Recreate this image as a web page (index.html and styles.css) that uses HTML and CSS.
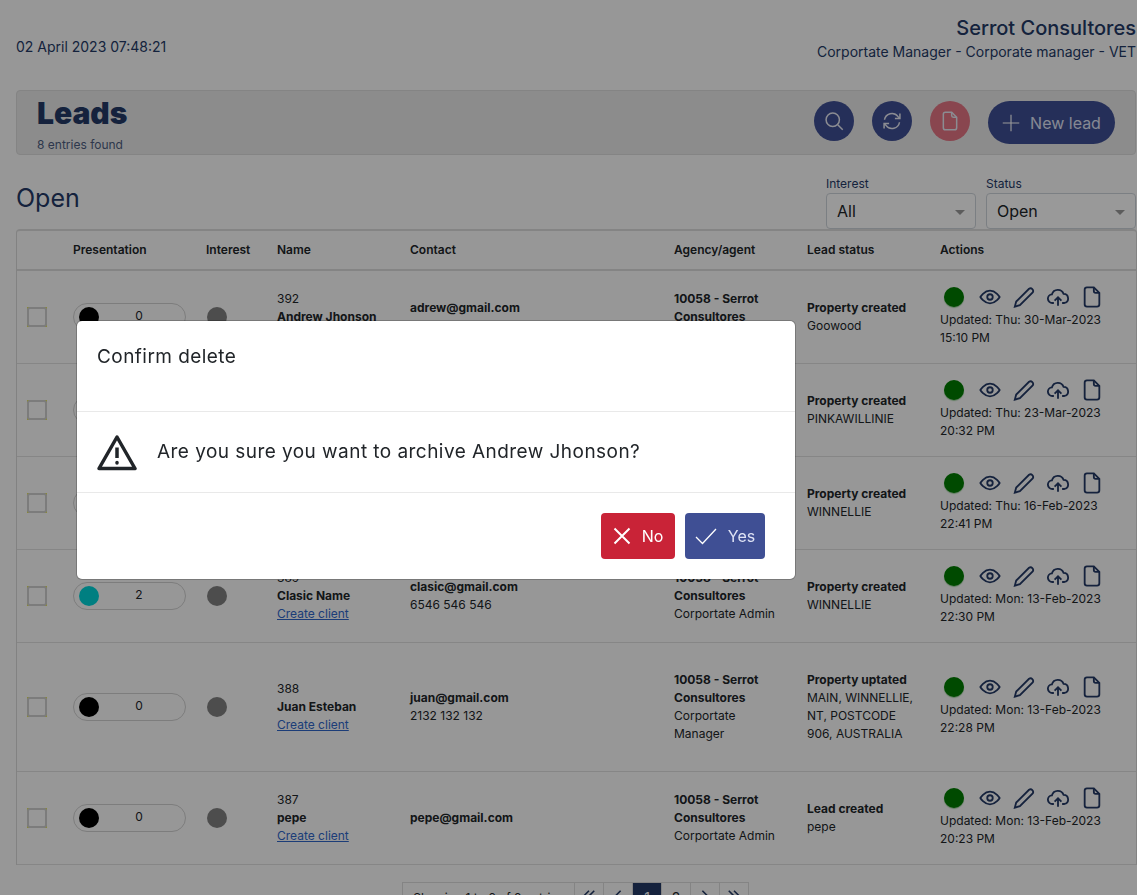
FILE: index.html
```html
<!doctype html>
<html lang="en">
<head>
  <meta charset="utf-8">
  <title>Leads</title>
  <link rel="stylesheet" href="styles.css">
</head>
<body>
  <svg class="defs" width="0" height="0">
    <symbol id="i-eye" viewBox="0 0 24 24"><path d="M1.500 12S5.500 5 12 5s10.500 7 10.500 7-4 7-10.500 7S1.500 12 1.500 12z"/><circle cx="12" cy="12" r="3"/></symbol>
    <symbol id="i-pen" viewBox="0 0 24 24"><path d="M17.500 3a2.900 2.900 0 0 1 4 4L7.500 21 2 22.500 3.500 17z"/></symbol>
    <symbol id="i-up" viewBox="0 0 24 24"><path d="M7.500 18.500H6a4.700 4.700 0 0 1-.6-9.400A6.700 6.700 0 0 1 18.100 8.600a5 5 0 0 1 .9 9.900h-2.500"/><path d="M12 21.500V12.500M8.300 16l3.700-3.700 3.700 3.700"/></symbol>
    <symbol id="i-doc" viewBox="0 0 24 24"><path d="M14 1.500H6.500a2.500 2.500 0 0 0-2.500 2.500v16a2.500 2.500 0 0 0 2.500 2.500h11a2.500 2.500 0 0 0 2.500-2.500V7.500z"/><path d="M14 1.500v4a2 2 0 0 0 2 2h4"/></symbol>
  </svg>

  <div class="page">
    <header class="topbar">
      <div class="date">02 April 2023 07:48:21</div>
      <div class="who">
        <div class="who-name">Serrot Consultores</div>
        <div class="who-role">Corportate Manager - Corporate manager - VET</div>
      </div>
    </header>

    <section class="title-card">
      <div class="title-text">
        <h1>Leads</h1>
        <div class="found">8 entries found</div>
      </div>
      <div class="title-actions">
        <button class="round">
          <svg viewBox="0 0 24 24"><circle cx="10.500" cy="10.500" r="8"/><path d="M16.500 16.500l6 6"/></svg>
        </button>
        <button class="round">
          <svg viewBox="0 0 24 24"><path d="M3 10.500A9 9 0 0 1 19 6.500l2 2"/><path d="M21.500 3v6h-6"/><path d="M21 13.500A9 9 0 0 1 5 17.500l-2-2"/><path d="M2.500 21v-6h6"/></svg>
        </button>
        <button class="round round-red">
          <svg viewBox="0 0 24 24"><use href="#i-doc"/></svg>
        </button>
        <button class="pill-btn">
          <svg viewBox="0 0 24 24"><path d="M12 1v22M1 12h22"/></svg>
          New lead
        </button>
      </div>
    </section>

    <section class="open-bar">
      <h2>Open</h2>
      <div class="filters">
        <div class="filter">
          <label>Interest</label>
          <div class="select">All</div>
        </div>
        <div class="filter">
          <label>Status</label>
          <div class="select">Open</div>
        </div>
      </div>
    </section>

    <table class="leads">
      <colgroup>
        <col class="c-check"><col class="c-pres"><col class="c-int"><col class="c-name">
        <col class="c-contact"><col class="c-agency"><col class="c-status"><col class="c-actions">
      </colgroup>
      <thead>
        <tr>
          <th></th><th>Presentation</th><th>Interest</th><th>Name</th>
          <th>Contact</th><th>Agency/agent</th><th>Lead status</th><th>Actions</th>
        </tr>
      </thead>
      <tbody>
        <tr>
          <td><span class="check"><span></span></span></td>
          <td><div class="pres"><span class="dot dot-black"></span><span class="num">0</span></div></td>
          <td><span class="dot dot-grey"></span></td>
          <td>392<br><b>Andrew Jhonson</b><br><a href="#">Create client</a></td>
          <td><b>adrew@gmail.com</b><br>6546 546 546</td>
          <td><b>10058 - Serrot Consultores</b><br>Corportate Admin</td>
          <td><b>Property created</b><br>Goowood</td>
          <td>
            <div class="acts"><span class="dot dot-green"></span><svg><use href="#i-eye"/></svg><svg><use href="#i-pen"/></svg><svg><use href="#i-up"/></svg><svg><use href="#i-doc"/></svg></div>
            Updated: Thu: 30-Mar-2023<br>15:10 PM
          </td>
        </tr>
        <tr>
          <td><span class="check"><span></span></span></td>
          <td><div class="pres"><span class="dot dot-black"></span><span class="num">0</span></div></td>
          <td><span class="dot dot-grey"></span></td>
          <td>391<br><b>Maria Lopez</b><br><a href="#">Create client</a></td>
          <td><b>maria@gmail.com</b><br>2132 132 132</td>
          <td><b>10058 - Serrot Consultores</b><br>Corportate Admin</td>
          <td><b>Property created</b><br>PINKAWILLINIE</td>
          <td>
            <div class="acts"><span class="dot dot-green"></span><svg><use href="#i-eye"/></svg><svg><use href="#i-pen"/></svg><svg><use href="#i-up"/></svg><svg><use href="#i-doc"/></svg></div>
            Updated: Thu: 23-Mar-2023<br>20:32 PM
          </td>
        </tr>
        <tr>
          <td><span class="check"><span></span></span></td>
          <td><div class="pres"><span class="dot dot-black"></span><span class="num">0</span></div></td>
          <td><span class="dot dot-grey"></span></td>
          <td>390<br><b>Test Name</b><br><a href="#">Create client</a></td>
          <td><b>test@gmail.com</b><br>6546 546 546</td>
          <td><b>10058 - Serrot Consultores</b><br>Corportate Admin</td>
          <td><b>Property created</b><br>WINNELLIE</td>
          <td>
            <div class="acts"><span class="dot dot-green"></span><svg><use href="#i-eye"/></svg><svg><use href="#i-pen"/></svg><svg><use href="#i-up"/></svg><svg><use href="#i-doc"/></svg></div>
            Updated: Thu: 16-Feb-2023<br>22:41 PM
          </td>
        </tr>
        <tr>
          <td><span class="check"><span></span></span></td>
          <td><div class="pres"><span class="dot dot-teal"></span><span class="num">2</span></div></td>
          <td><span class="dot dot-grey"></span></td>
          <td>389<br><b>Clasic Name</b><br><a href="#">Create client</a></td>
          <td><b>clasic@gmail.com</b><br>6546 546 546</td>
          <td><b>10058 - Serrot Consultores</b><br>Corportate Admin</td>
          <td><b>Property created</b><br>WINNELLIE</td>
          <td>
            <div class="acts"><span class="dot dot-green"></span><svg><use href="#i-eye"/></svg><svg><use href="#i-pen"/></svg><svg><use href="#i-up"/></svg><svg><use href="#i-doc"/></svg></div>
            Updated: Mon: 13-Feb-2023<br>22:30 PM
          </td>
        </tr>
        <tr class="tall">
          <td><span class="check"><span></span></span></td>
          <td><div class="pres"><span class="dot dot-black"></span><span class="num">0</span></div></td>
          <td><span class="dot dot-grey"></span></td>
          <td>388<br><b>Juan Esteban</b><br><a href="#">Create client</a></td>
          <td><b>juan@gmail.com</b><br>2132 132 132</td>
          <td><b>10058 - Serrot Consultores</b><br>Corportate Manager</td>
          <td><b>Property uptated</b><br>MAIN, WINNELLIE, NT, POSTCODE 906, AUSTRALIA</td>
          <td>
            <div class="acts"><span class="dot dot-green"></span><svg><use href="#i-eye"/></svg><svg><use href="#i-pen"/></svg><svg><use href="#i-up"/></svg><svg><use href="#i-doc"/></svg></div>
            Updated: Mon: 13-Feb-2023<br>22:28 PM
          </td>
        </tr>
        <tr>
          <td><span class="check"><span></span></span></td>
          <td><div class="pres"><span class="dot dot-black"></span><span class="num">0</span></div></td>
          <td><span class="dot dot-grey"></span></td>
          <td>387<br><b>pepe</b><br><a href="#">Create client</a></td>
          <td><b>pepe@gmail.com</b></td>
          <td><b>10058 - Serrot Consultores</b><br>Corportate Admin</td>
          <td><b>Lead created</b><br>pepe</td>
          <td>
            <div class="acts"><span class="dot dot-green"></span><svg><use href="#i-eye"/></svg><svg><use href="#i-pen"/></svg><svg><use href="#i-up"/></svg><svg><use href="#i-doc"/></svg></div>
            Updated: Mon: 13-Feb-2023<br>20:23 PM
          </td>
        </tr>
      </tbody>
    </table>

    <nav class="pager">
      <span class="pager-info">Showing 1 to 6 of 8 entries</span>
      <span class="pager-item"><svg viewBox="0 0 16 16"><path d="M8 2 2 8l6 6M14 2 8 8l6 6"/></svg></span>
      <span class="pager-item"><svg viewBox="0 0 16 16"><path d="M11 2 5 8l6 6"/></svg></span>
      <span class="pager-item pager-on">1</span>
      <span class="pager-item">2</span>
      <span class="pager-item"><svg viewBox="0 0 16 16"><path d="M5 2l6 6-6 6"/></svg></span>
      <span class="pager-item"><svg viewBox="0 0 16 16"><path d="M2 2l6 6-6 6M8 2l6 6-6 6"/></svg></span>
    </nav>
  </div>

  <div class="backdrop"></div>
  <div class="modal">
    <div class="modal-head">Confirm delete</div>
    <div class="modal-body">
      <svg class="warn" viewBox="0 0 40 37"><path d="M20 3 38 34.500H2z"/><path d="M20 13.500v10.500"/><path class="warn-dot" d="M20 28.500v.5"/></svg>
      <span>Are you sure you want to archive Andrew Jhonson?</span>
    </div>
    <div class="modal-foot">
      <button class="btn btn-no">
        <svg viewBox="0 0 18 18"><path d="M1.500 1.500l15 15M16.500 1.500l-15 15"/></svg>
        No
      </button>
      <button class="btn btn-yes">
        <svg viewBox="0 0 22 18"><path d="M1 10l6.500 6.500L21 2"/></svg>
        Yes
      </button>
    </div>
  </div>
</body>
</html>
```

FILE: styles.css
```css
:root {
  --navy: #243a66;
  --ink: #212529;
  --blue: #3f4f94;
  --line: #d3d3d3;
}
html, body { margin: 0; padding: 0; height: 100%; overflow: hidden; }
body {
  background: #fcfcfc;
  color: var(--ink);
  font-family: Inter, "Noto Sans", sans-serif;
  font-size: 12px;
  line-height: 18px;
}
.defs { position: absolute; }
.page { padding-left: 16px; }

/* top bar */
.topbar {
  display: flex;
  justify-content: space-between;
  align-items: flex-start;
  height: 90px;
  color: var(--navy);
}
.date { font-size: 14px; line-height: 18px; margin-top: 38px; }
.who { text-align: right; padding-right: 1px; margin-top: 16px; }
.who-name { font-size: 20px; font-weight: 500; line-height: 25px; }
.who-role { font-size: 14px; line-height: 22px; }

/* title card */
.title-card {
  display: flex;
  justify-content: space-between;
  align-items: flex-start;
  height: 65px;
  box-sizing: border-box;
  margin-right: 1px;
  padding: 0 20px;
  background: #eaeaea;
  border: 1px solid #dcdcdc;
  border-radius: 4px;
}
h1 {
  margin: 5px 0 0;
  font-size: 30px;
  line-height: 34px;
  font-weight: 900;
  color: var(--navy);
}
.found { margin-top: 6px; color: #4d5d80; line-height: 18px; }
.title-actions { display: flex; gap: 18px; padding-top: 10px; }
.round {
  width: 40px;
  height: 40px;
  padding: 0;
  border: 0;
  border-radius: 50%;
  background: var(--blue);
  display: flex;
  align-items: center;
  justify-content: center;
}
.round svg { width: 20px; height: 20px; fill: none; stroke: #e8eaf4; stroke-width: 1.800; }
.round-red { background: #e47584; }
.pill-btn {
  width: 127px;
  height: 43px;
  padding: 0;
  border: 0;
  border-radius: 22px;
  background: var(--blue);
  color: #dfe3f5;
  font: 400 16px Inter, sans-serif;
  display: flex;
  align-items: center;
  justify-content: center;
  gap: 10px;
}
.pill-btn svg { width: 18px; height: 18px; fill: none; stroke: #fff; stroke-width: 1.500; }

/* open + filters */
.open-bar {
  display: flex;
  justify-content: space-between;
  height: 74px;
  box-sizing: border-box;
  padding-top: 20px;
  margin-right: 1px;
}
h2 {
  margin: 7px 0 0;
  font-size: 25px;
  line-height: 32px;
  font-weight: 400;
  color: var(--navy);
}
.filters { display: flex; gap: 10px; }
.filter { width: 150px; }
.filter label { display: block; line-height: 18px; color: var(--navy); }
.select {
  position: relative;
  height: 36px;
  box-sizing: border-box;
  padding: 0 10px;
  border: 1px solid #ced4da;
  border-radius: 4px;
  background: #fff;
  font-size: 16px;
  line-height: 34px;
}
.select::after {
  content: "";
  position: absolute;
  right: 10px;
  top: 16px;
  border-left: 5px solid transparent;
  border-right: 5px solid transparent;
  border-top: 5px solid #999;
}

/* table */
.leads {
  width: 1121px;
  table-layout: fixed;
  border-collapse: separate;
  border-spacing: 0;
  background: #fcfcfc;
  border-left: 1px solid #d9d9d9;
  border-right: 1px solid #d9d9d9;
  border-top: 2px solid #dcdcdc;
  border-radius: 4px 4px 0 0;
}
.c-check { width: 46px; }
.c-pres { width: 133px; }
.c-int { width: 71px; }
.c-name { width: 133px; }
.c-contact { width: 264px; }
.c-agency { width: 133px; }
.c-status { width: 133px; }
.c-actions { width: 206px; }
.leads th {
  height: 38px;
  padding: 0 10px;
  text-align: left;
  font-weight: 600;
  border-bottom: 2px solid #dcdcdc;
}
.leads td {
  padding: 0 10px;
  vertical-align: middle;
  border-bottom: 1px solid #e0e0e0;
}
.leads tbody tr { height: 93px; }
.leads tbody tr.tall { height: 129px; }
.leads b { font-weight: 700; }
.leads a { color: #2f66c9; }

.check { display: block; width: 20px; height: 20px; background: #e3e35a; }
.check span {
  display: block;
  width: 20px;
  height: 20px;
  box-sizing: border-box;
  border: 2px solid #cfcfcf;
  border-radius: 3px;
  background: #fcfcfc;
}
.pres {
  display: flex;
  align-items: center;
  width: 113px;
  height: 28px;
  box-sizing: border-box;
  padding-left: 5px;
  border: 1px solid #d0d0d0;
  border-radius: 14px;
}
.num { flex: 1; text-align: center; padding-right: 6px; margin-top: -3px; }
.dot { display: block; width: 20px; height: 20px; border-radius: 50%; flex: none; }
.dot-black { background: #000; }
.dot-teal { background: #00d4d8; }
.dot-grey { background: #808080; margin-left: 1px; }
.dot-green { background: #007c00; box-shadow: 0 1px 1px #9ccf9c; }
.acts {
  display: flex;
  align-items: center;
  gap: 12px;
  height: 22px;
  padding-left: 4px;
  margin: -2px 0 3px;
}
.acts .dot { margin-right: 3px; }
.acts svg { width: 22px; height: 22px; fill: none; stroke: var(--navy); stroke-width: 2; }

/* pagination */
.pager { display: flex; padding: 17px 0 0 387px; }
.pager-info, .pager-item {
  height: 30px;
  box-sizing: border-box;
  padding-top: 6px;
  border: 1px solid #dcdcdc;
  margin-left: -1px;
  line-height: 18px;
  text-align: center;
}
.pager-info { width: 173px; }
.pager-item { width: 30px; font-size: 14px; }
.pager-item svg { width: 14px; height: 14px; fill: none; stroke: var(--navy); stroke-width: 1.800; }
.pager-on { background: var(--navy); color: #fff; }

/* modal */
.backdrop { position: fixed; inset: 0; background: rgba(0, 0, 0, .4); }
.modal {
  position: absolute;
  left: 77px;
  top: 321px;
  width: 718px;
  height: 258px;
  box-sizing: border-box;
  background: #fff;
  border-radius: 5px;
  box-shadow: 0 0 0 1px rgba(0, 0, 0, .2);
  color: #212529;
  font-size: 19px;
  letter-spacing: .45px;
  line-height: 24px;
}
.modal-head {
  height: 91px;
  box-sizing: border-box;
  padding: 24px 20px 0;
  border-bottom: 1px solid #e9e9e9;
}
.modal-body {
  display: flex;
  align-items: center;
  gap: 20px;
  height: 81px;
  box-sizing: border-box;
  padding: 0 20px;
  border-bottom: 1px solid #e9e9e9;
}
.warn { width: 40px; height: 37px; fill: none; stroke: #212529; stroke-width: 3.500; stroke-linejoin: round; }
.warn-dot { stroke-linecap: round; }
.modal-foot {
  display: flex;
  justify-content: flex-end;
  gap: 10px;
  padding: 20px 30px 0;
}
.btn {
  display: flex;
  align-items: center;
  justify-content: center;
  gap: 11px;
  height: 46px;
  padding: 0;
  border: 0;
  border-radius: 4px;
  color: #fff;
  font: 400 16px Inter, sans-serif;
}
.btn svg { fill: none; stroke: #fff; }
.btn-no { width: 74px; background: #c92337; }
.btn-no svg { width: 18px; height: 18px; stroke-width: 2; }
.btn-yes { width: 80px; background: var(--blue); color: #dfe3f5; }
.btn-yes svg { width: 22px; height: 18px; stroke-width: 1.300; }
```
